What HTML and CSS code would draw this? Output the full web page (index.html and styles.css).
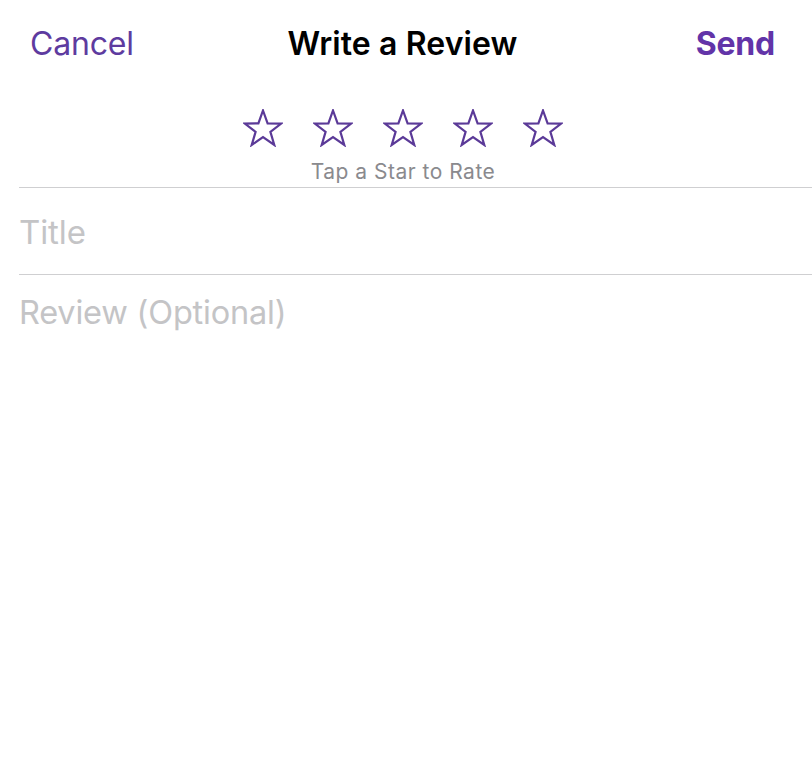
FILE: index.html
```html
<!DOCTYPE html>
<html>
<head>
<meta charset="utf-8">
<link rel="stylesheet" href="styles.css">
</head>
<body>
<div class="screen">
  <header class="nav">
    <span class="nav-btn cancel">Cancel</span>
    <span class="nav-title">Write a Review</span>
    <span class="nav-btn send">Send</span>
  </header>
  <section class="rating">
    <div class="stars">
      <svg class="star" viewBox="0 0 40 38"><polygon points="20,1.5 24.6,14.3 38.2,14.6 27.4,22.9 31.3,36 20,28.2 8.7,36 12.6,22.9 1.8,14.6 15.4,14.3"/></svg>
      <svg class="star" viewBox="0 0 40 38"><polygon points="20,1.5 24.6,14.3 38.2,14.6 27.4,22.9 31.3,36 20,28.2 8.7,36 12.6,22.9 1.8,14.6 15.4,14.3"/></svg>
      <svg class="star" viewBox="0 0 40 38"><polygon points="20,1.5 24.6,14.3 38.2,14.6 27.4,22.9 31.3,36 20,28.2 8.7,36 12.6,22.9 1.8,14.6 15.4,14.3"/></svg>
      <svg class="star" viewBox="0 0 40 38"><polygon points="20,1.5 24.6,14.3 38.2,14.6 27.4,22.9 31.3,36 20,28.2 8.7,36 12.6,22.9 1.8,14.6 15.4,14.3"/></svg>
      <svg class="star" viewBox="0 0 40 38"><polygon points="20,1.5 24.6,14.3 38.2,14.6 27.4,22.9 31.3,36 20,28.2 8.7,36 12.6,22.9 1.8,14.6 15.4,14.3"/></svg>
    </div>
    <div class="hint">Tap a Star to Rate</div>
  </section>
  <div class="field title-field">Title</div>
  <div class="field review-field">Review (Optional)</div>
</div>
</body>
</html>
```
FILE: styles.css
```css
html, body {
  margin: 0;
  padding: 0;
  background: #ffffff;
}
body {
  font-family: Inter, "Noto Sans", "Liberation Sans", sans-serif;
  width: 812px;
  height: 774px;
  overflow: hidden;
}
.screen {
  display: flex;
  flex-direction: column;
}
.nav {
  display: grid;
  grid-template-columns: 1fr auto 1fr;
  align-items: center;
  height: 86px;
  padding: 0 37px 0 30px;
}
.nav-btn {
  font-size: 32px;
  color: #5e3b9f;
  letter-spacing: -0.2px;
}
.cancel {
  font-weight: 400;
  justify-self: start;
}
.send {
  font-weight: 700;
  color: #6234a8;
  justify-self: end;
}
.nav-title {
  font-size: 32px;
  font-weight: 600;
  color: #000;
  letter-spacing: 0.1px;
}
.rating {
  display: flex;
  flex-direction: column;
  align-items: center;
  padding-top: 23px;
  margin-left: 19px;
  padding-right: 25px;
  border-bottom: 1px solid #cfcfd1;
  height: 102px;
  box-sizing: border-box;
}
.stars {
  display: flex;
  gap: 30px;
}
.star {
  width: 40px;
  height: 38px;
  fill: none;
  stroke: #5b3a98;
  stroke-width: 2.2;
  stroke-linejoin: miter;
}
.hint {
  font-size: 21px;
  color: #8a8a8e;
  margin-top: 12px;
  letter-spacing: 0.5px;
}
.field {
  margin-left: 19px;
  font-size: 33px;
  color: #c4c4c6;
  letter-spacing: -0.1px;
}
.title-field {
  height: 86px;
  line-height: 88px;
  border-bottom: 1px solid #cfcfd1;
}
.review-field {
  padding-top: 18px;
  line-height: 40px;
  font-size: 32.5px;
  letter-spacing: -0.2px;
}
```
